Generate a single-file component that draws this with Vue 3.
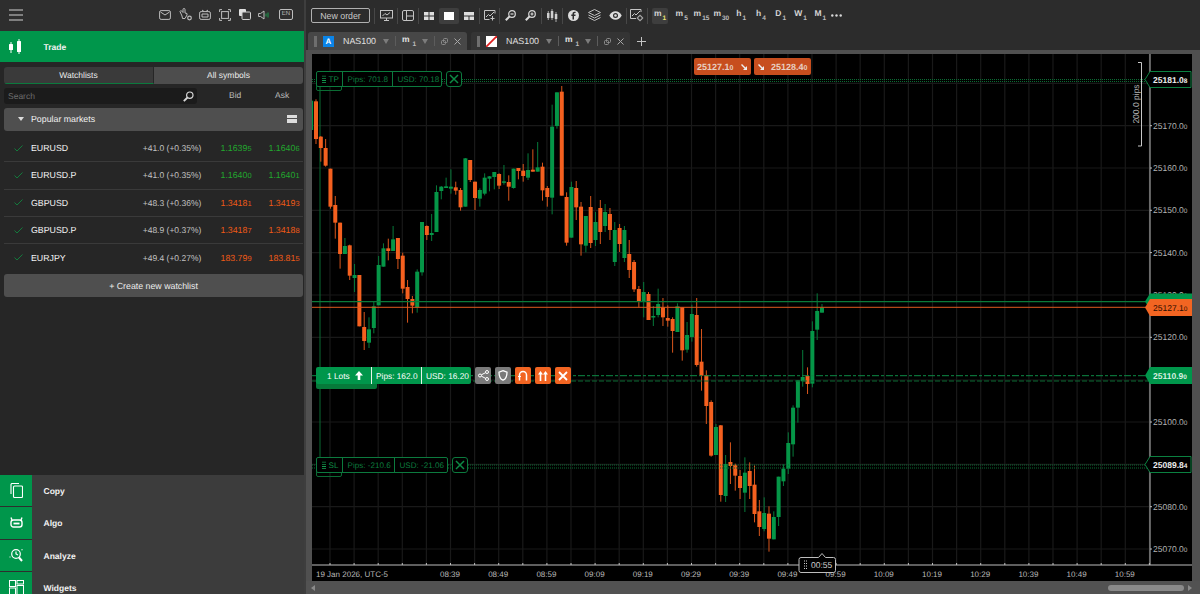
<script setup>
// candle rows: colour, wick top, body top, body bottom, wick bottom
const part1 = `g 0 62 150 175|o 58 64 177 192|o 168 170 204 245|o 177 204 257 260|o 266 266 380 386|o 348 375 428 476|o 428 428 522 566|g 474 498 522 522|o 494 496 587 600|g 552 585 594 636|o 585 585 739 739|o 696 741 783 810|g 712 748 788 804|g 666 679 744 760|g 528 555 676 676|g 490 505 560 560|o 476 505 513 541|g 438 478 513 513|o 474 474 537 567|o 518 527 626 640|o 600 621 657 728|o 648 657 677 700|g 568 575 682 698|g 426 426 577 587|o 436 438 465 480|g 402 459 465 483|g 316 336 456 456|g 318 320 333 358|g 293 319 324 324|g 268 320 326 341|o 305 322 332 344|o 324 330 382 392|g 234 235 380 380|o 240 240 300 306|o 305 305 354 390|g 325 330 356 380|g 280 293 341 346|g 288 289 296 334|g 276 276 291 328|o 280 282 317 327|g 255 304 308 314|o 286 306 320 362|g 266 266 324 326|o 264 264 273 298|o 252 272 288 305|g 220 270 293 300|o 208 269 275 275|g 186 262 275 275|o 248 260 331 362|o 318 324 351 380|g 74 140 353 403|g 37 37 138 146|o 18 35 347 347|o 337 351 488 497|g 305 321 473 473|o 303 324 382 420|o 366 380 493 527|g 408 408 497 517`
const part2 = `o 196 207 243 248|g 212 222 240 246|o 200 208 232 244|g 204 212 226 232|o 208 214 230 240|g 222 230 262 266|o 224 228 244 252|g 226 230 258 262|o 240 254 270 278`
const part3 = `o -60 -54 28 36|o 18 27 66 82|g 6 36 66 112|o 36 42 120 120|g 78 108 112 138|g 26 72 105 112|o 54 82 112 138|o 76 114 122 140|o 112 117 153 218|g 70 79 156 156|o 82 82 211 242|g 126 165 209 218|g 74 102 171 185|o 54 105 255 260|o 147 245 287 332|o 271 285 378 432|o 361 366 527 530|g 432 441 525 525|o 435 436 645 665|g 525 552 648 666|o 487 546 558 612|o 551 555 587 632|o 570 588 624 657|g 532 578 638 696|o 547 573 618 657|o 556 614 702 727|o 660 694 741 768|g 652 699 747 754|o 679 701 776 815|g 694 711 778 778|g 590 590 711 738|g 553 566 604 618|g 457 489 566 582|g 376 383 493 530|g 300 301 383 428|g 210 291 304 320|o 262 288 312 342|g 124 153 311 322|g 40 93 149 180|g 72 83 98 98`

function parseRows(text, base, scale) {
  return text.split('|').map((row) => {
    const [dir, ...vals] = row.split(' ')
    const [top, bodyTop, bodyBot, bot] = vals.map((v) => base + Number(v) / scale)
    return { dir, top, bodyTop, bodyBot, bot }
  })
}

const candles = [
  ...parseRows(part1, 80, 3),
  ...parseRows(part2, 0, 1),
  ...parseRows(part3, 280, 3)
].map((c, i) => ({ ...c, x: 311.18 + 4.819 * i }))

const gridX = Array.from({ length: 35 }, (_, i) => 330 + 24.1 * i)
const prices = [
  { v: '25170.0', y: 125.7 }, { v: '25160.0', y: 168 }, { v: '25150.0', y: 210.3 },
  { v: '25140.0', y: 252.6 }, { v: '25130.0', y: 295 }, { v: '25120.0', y: 337.3 },
  { v: '25100.0', y: 422 }, { v: '25090.0', y: 464.4 },
  { v: '25080.0', y: 506.7 }, { v: '25070.0', y: 549 }
]
const gridY = [83.4, 125.7, 168, 210.3, 252.6, 295, 337.3, 380, 422, 464.4, 506.7, 549]
const times = ['08:39', '08:49', '08:59', '09:09', '09:19', '09:29', '09:39', '09:49', '09:59', '10:09', '10:19', '10:29', '10:39', '10:49', '10:59']
  .map((t, i) => ({ t, x: 450 + 48.2 * i }))

const rows = [
  { name: 'EURUSD', change: '+41.0 (+0.35%)', bid: '1.1639', bidS: '5', ask: '1.1640', askS: '6', up: true },
  { name: 'EURUSD.P', change: '+41.0 (+0.35%)', bid: '1.1640', bidS: '0', ask: '1.1640', askS: '1', up: true },
  { name: 'GBPUSD', change: '+48.3 (+0.36%)', bid: '1.3418', bidS: '1', ask: '1.3419', askS: '3', up: false },
  { name: 'GBPUSD.P', change: '+48.9 (+0.37%)', bid: '1.3418', bidS: '7', ask: '1.3418', askS: '8', up: false },
  { name: 'EURJPY', change: '+49.4 (+0.27%)', bid: '183.79', bidS: '9', ask: '183.81', askS: '5', up: false }
]

const timeframes = [
  { l: 'm', s: '1', active: true }, { l: 'm', s: '5' }, { l: 'm', s: '15' }, { l: 'm', s: '30' },
  { l: 'h', s: '1' }, { l: 'h', s: '4' }, { l: 'D', s: '1' }, { l: 'W', s: '1' }, { l: 'M', s: '1' }
]

const tabs = [
  { id: 'a', active: true },
  { id: 'b', active: false }
]
</script>

<template>
  <div class="app">
    <aside class="side">
      <header class="side-head">
        <svg class="burger" width="14" height="12" viewBox="0 0 14 12"><path d="M0 1h14M0 6h14M0 11h14" stroke="#cfcfcf" stroke-width="1.2"/></svg>
        <div class="head-icons">
          <svg width="12" height="10" viewBox="0 0 12 10" fill="none" stroke="#bdbdbd"><rect x=".6" y=".6" width="10.8" height="8.8" rx="1.5"/><path d="M1.5 2l4.500 3 4.500-3"/></svg>
          <svg width="13" height="13" viewBox="0 0 13 13" fill="none" stroke="#bdbdbd"><path d="M1 3.500l1-1 2 2V1.500a1 1 0 012 0V5l2 .5V7l-2 3.500H3.500L3 8z"/><circle cx="10.500" cy="10" r="1.800" stroke-width="1.200"/></svg>
          <svg width="12" height="11" viewBox="0 0 12 11" fill="none" stroke="#bdbdbd"><rect x=".6" y="2.600" width="10.800" height="7.800" rx="1.500"/><path d="M3 1l2 1.500M9 1L7 2.500M3 5h6v3H3z"/></svg>
          <svg width="12" height="12" viewBox="0 0 12 12" fill="none" stroke="#bdbdbd"><path d="M.6 3V.6H3M9 .6h2.400V3M11.400 9v2.400H9M3 11.400H.6V9"/><rect x="2.600" y="2.600" width="6.800" height="6.800"/></svg>
          <svg width="12" height="11" viewBox="0 0 12 11"><rect x="0" y="0" width="7" height="7" rx="1" fill="#e0e0e0"/><rect x="3" y="3" width="8.500" height="7.500" rx="1" fill="#3a3a3a" stroke="#cfcfcf"/></svg>
          <svg width="13" height="10" viewBox="0 0 13 10" fill="none"><path d="M.6 3.500h2L6 1v8L2.600 6.500h-2z" stroke="#bdbdbd"/><path d="M8 3.500v3M10 2.500v5" stroke="#1c9a4c"/></svg>
          <span class="lang">EN</span>
        </div>
      </header>

      <div class="trade">
        <span class="nav-ico">
          <svg width="14" height="15" viewBox="0 0 14 15" fill="#fff"><rect x="0" y="5" width="4" height="6" rx=".5"/><path d="M2 3v11" stroke="#fff"/><rect x="8" y="2" width="4" height="11" rx=".5"/><path d="M10 0v15" stroke="#fff"/></svg>
        </span>
        <span class="nav-text">Trade</span>
      </div>

      <div class="tabs-switch">
        <div class="switch on">Watchlists</div>
        <div class="switch">All symbols</div>
      </div>

      <div class="search-row">
        <div class="search">
          <span>Search</span>
          <svg width="11" height="11" viewBox="0 0 11 11" fill="none" stroke="#d8d8d8" stroke-width="1.200"><circle cx="6.800" cy="4.200" r="3.200"/><path d="M4.500 6.500L.8 10.200" stroke-width="1.800"/></svg>
        </div>
        <span class="col-bid">Bid</span>
        <span class="col-ask">Ask</span>
      </div>

      <div class="group-head">
        <span class="caret"></span>
        <span class="group-name">Popular markets</span>
        <span class="group-btn"></span>
      </div>

      <div class="list">
        <div v-for="r in rows" :key="r.name" class="row">
          <svg width="9" height="7" viewBox="0 0 9 7" fill="none" stroke="#137a3c"><path d="M.5 3.500L3 6 8.500.5"/></svg>
          <span class="sym">{{ r.name }}</span>
          <span class="chg">{{ r.change }}</span>
          <span class="px" :class="r.up ? 'up' : 'down'">{{ r.bid }}<small>{{ r.bidS }}</small></span>
          <span class="px" :class="r.up ? 'up' : 'down'">{{ r.ask }}<small>{{ r.askS }}</small></span>
        </div>
      </div>

      <div class="create">+ Create new watchlist</div>

      <nav class="bottom-nav">
        <div class="nav-item">
          <span class="nav-ico">
            <svg width="13" height="15" viewBox="0 0 13 15" fill="none" stroke="#fff" stroke-width="1.100"><path d="M1 11V1.500a1 1 0 011-1h7"/><rect x="3.500" y="3" width="9" height="11.500" rx="1"/></svg>
          </span>
          <span class="nav-text">Copy</span>
        </div>
        <div class="nav-item">
          <span class="nav-ico">
            <svg width="13" height="11" viewBox="0 0 13 11" fill="none" stroke="#fff" stroke-width="1.400"><path d="M2 3L1 .5M11 3l1-2.500"/><rect x="1" y="3" width="11" height="7" rx="2.500"/><path d="M3.500 6.500h6" stroke-width="1.800"/></svg>
          </span>
          <span class="nav-text">Algo</span>
        </div>
        <div class="nav-item">
          <span class="nav-ico">
            <svg width="15" height="14" viewBox="0 0 15 14" fill="none" stroke="#fff" stroke-width="1.200"><circle cx="7" cy="6" r="4.300"/><path d="M10 9.500l3 3.500" stroke-width="2"/><path d="M7 3.500V6l2 1M.5 9h1M12.500 2l1-.5"/></svg>
          </span>
          <span class="nav-text">Analyze</span>
        </div>
        <div class="nav-item">
          <span class="nav-ico">
            <svg width="15" height="15" viewBox="0 0 15 15" fill="none" stroke="#fff" stroke-width="1"><rect x=".5" y=".5" width="6" height="6"/><rect x="8" y=".5" width="6.500" height="3.500"/><rect x=".5" y="8" width="6" height="7"/><rect x="8" y="5.500" width="6.500" height="9.500"/></svg>
          </span>
          <span class="nav-text">Widgets</span>
        </div>
      </nav>
    </aside>

    <main class="main">
      <div class="toolbar">
        <button class="new-order">New order</button>
        <i class="sep"></i>
        <span class="tool w22"><svg width="13" height="11" viewBox="0 0 13 11" fill="none" stroke="#c4c4c4"><rect x=".5" y=".5" width="12" height="7.500"/><path d="M2.500 6l2.500-2.500 2 1.500 3-2.500M4 10.500h5M6.500 8v2.500"/></svg></span>
        <i class="sep"></i>
        <span class="tool"><svg width="12" height="11" viewBox="0 0 12 11" fill="none" stroke="#c4c4c4"><rect x=".5" y=".5" width="11" height="10" rx="1.500"/><path d="M4.500 .5v10M4.500 6h7"/></svg></span>
        <i class="sep"></i>
        <span class="tool"><svg width="10" height="8" viewBox="0 0 10 8" fill="#ddd"><rect width="4.500" height="3.500"/><rect x="5.500" width="4.500" height="3.500"/><rect y="4.500" width="4.500" height="3.500"/><rect x="5.500" y="4.500" width="4.500" height="3.500"/></svg></span>
        <span class="tool current"><svg width="10" height="8" viewBox="0 0 10 8" fill="#fff"><rect width="10" height="8"/></svg></span>
        <span class="tool"><svg width="10" height="8" viewBox="0 0 10 8" fill="#ddd"><rect width="10" height="3.500"/><rect y="4.500" width="4.500" height="3.500"/><rect x="5.500" y="4.500" width="4.500" height="3.500"/></svg></span>
        <i class="sep"></i>
        <span class="tool w19"><svg width="12" height="11" viewBox="0 0 12 11" fill="none" stroke="#c4c4c4"><path d="M11 3.500V.5H.5v9h5"/><path d="M2 7l2.500-2.500 1.500 1.500 4-4M8.500 6v4.500M6.500 8.500h4"/></svg></span>
        <i class="sep"></i>
        <span class="tool w20-5"><svg width="11" height="11" viewBox="0 0 11 11" fill="none" stroke="#d8d8d8" stroke-width="1.200"><circle cx="7" cy="4" r="3.300"/><path d="M4.500 6.500L.8 10.200" stroke-width="2"/><path d="M5.500 4h3"/></svg></span>
        <span class="tool w20-5"><svg width="11" height="11" viewBox="0 0 11 11" fill="none" stroke="#d8d8d8" stroke-width="1.200"><circle cx="7" cy="4" r="3.300"/><path d="M4.500 6.500L.8 10.200" stroke-width="2"/><path d="M5.500 4h3M7 2.500v3"/></svg></span>
        <i class="sep"></i>
        <span class="tool"><svg width="11" height="13" viewBox="0 0 11 13" fill="#cfcfcf"><rect y="4" width="2.500" height="5"/><path d="M1.250 2v9M5 0v11M9 3v10" stroke="#cfcfcf" stroke-width=".8"/><rect x="3.800" y="2" width="2.500" height="7"/><rect x="7.800" y="5" width="2.500" height="5"/></svg></span>
        <i class="sep"></i>
        <span class="tool w21"><svg width="11" height="11" viewBox="0 0 11 11"><circle cx="5.500" cy="5.500" r="5.500" fill="#ddd"/><path d="M6 9.500V6h1.500V4.500H6V4c0-.6.300-.9 1-.9h.6V1.800H6.500C5.200 1.800 4.500 2.600 4.500 3.900v.6H3.300V6h1.200v3.500z" fill="#2c2c2c"/></svg></span>
        <span class="tool w21"><svg width="13" height="13" viewBox="0 0 13 13" fill="none" stroke="#bdbdbd"><path d="M6.500.5l6 3-6 3-6-3zM.5 6l6 3 6-3M.5 8.500l6 3 6-3"/></svg></span>
        <span class="tool w21"><svg width="13" height="9" viewBox="0 0 13 9"><path d="M.3 4.500C2 1.500 4 .3 6.500.3s4.500 1.200 6.200 4.200C11 7.500 9 8.700 6.500 8.700S2 7.500.3 4.500z" fill="#ddd"/><circle cx="6.500" cy="4.500" r="2.500" fill="#2c2c2c"/><circle cx="6.500" cy="4.500" r="1.300" fill="#ddd"/></svg></span>
        <i class="sep"></i>
        <span class="tool"><svg width="14" height="13" viewBox="0 0 14 13" fill="none" stroke="#c4c4c4"><path d="M11 3V.5H.5v9H6"/><path d="M2 7l2.500-2.500 1.500 1.500 4-4"/><circle cx="10" cy="9" r="2.200"/><path d="M10 5.800v1M10 11.200v1M6.800 9h1M12.200 9h1"/></svg></span>
        <i class="sep"></i>
        <div class="tf-list">
          <span v-for="tf in timeframes" :key="tf.l + tf.s" class="tf" :class="{ active: tf.active }">
            <b>{{ tf.l }}</b><sub>{{ tf.s }}</sub>
          </span>
          <svg class="more" width="11" height="3" viewBox="0 0 11 3" fill="#d8d8d8"><circle cx="1.300" cy="1.500" r="1.200"/><circle cx="5.500" cy="1.500" r="1.200"/><circle cx="9.700" cy="1.500" r="1.200"/></svg>
        </div>
      </div>

      <div class="tabstrip">
        <div v-for="t in tabs" :key="t.id" class="tab" :class="{ active: t.active }">
          <span class="grip"></span>
          <span v-if="t.id === 'a'" class="sym-ico blue">A</span>
          <svg v-else class="sym-ico" width="11" height="11" viewBox="0 0 11 11"><rect width="11" height="11" fill="#fff"/><path d="M0 11L11 0" stroke="#e02020" stroke-width="1.800"/></svg>
          <span class="tab-name">NAS100</span>
          <span class="tri"></span>
          <i class="tab-sep"></i>
          <span class="tab-tf"><b>m</b><sub>1</sub></span>
          <span class="tri"></span>
          <i class="tab-sep"></i>
          <svg width="7" height="7" viewBox="0 0 7 7" fill="none" stroke="#8c8c8c"><rect x="2.500" y=".5" width="4" height="4" rx="1"/><rect x=".5" y="2.500" width="4" height="4" rx="1"/></svg>
          <svg class="tab-x" width="7" height="7" viewBox="0 0 7 7" stroke="#a8a8a8"><path d="M.5 .5l6 6M6.500 .5l-6 6"/></svg>
        </div>
        <svg class="plus" width="9" height="9" viewBox="0 0 9 9" stroke="#c4c4c4"><path d="M4.500 0v9M0 4.500h9"/></svg>
      </div>

      <div class="chart-frame">
        <div class="chart">
          <svg class="plot" width="880" height="527" viewBox="312 54 880 527" font-family="Liberation Sans, Arial, sans-serif">
            <g stroke="#191919" stroke-width="1.200">
              <line v-for="x in gridX" :key="x" :x1="x" :x2="x" y1="54" y2="565" />
              <line v-for="y in gridY" :key="y" x1="312" x2="1150" :y1="y" :y2="y" />
            </g>

            <line x1="320" x2="320" y1="85" y2="468" stroke="#0b6b33" />

            <g v-for="(c, i) in candles" :key="i">
              <line :x1="c.x" :x2="c.x" :y1="c.top" :y2="c.bot" :stroke="c.dir === 'g' ? '#067a3a' : '#d9561c'" />
              <rect
                :x="c.x - 2"
                :y="c.bodyTop"
                width="4"
                :height="Math.max(c.bodyBot - c.bodyTop, 1.5)"
                :fill="c.dir === 'g' ? '#059647' : '#f4601f'"
              />
            </g>

            <g fill="none">
              <path d="M312 79.500H1150M312 81.500H1150" stroke="#0b6b33" stroke-dasharray="1 1" />
              <path d="M312 465H1150M312 468H1150" stroke="#0b6b33" stroke-dasharray="1 1" />
              <path d="M312 375.700H1150" stroke="#0d8a45" stroke-dasharray="7 2 3 2" />
              <path d="M312 381H1150" stroke="#0b6b33" stroke-dasharray="5 2" />
              <path d="M312 301.700H1150" stroke="#0b7a3a" stroke-width="1.200" />
              <path d="M312 307.300H1150" stroke="#e0591f" />
            </g>

            <!-- axes -->
            <path d="M1150 54V565M312 565H1192" stroke="#bdbdbd" fill="none" />
            <g stroke="#bdbdbd">
              <line v-for="x in gridX" :key="'t' + x" :x1="x" :x2="x" y1="563" y2="565" />
              <line v-for="p in prices" :key="'p' + p.y" x1="1150" x2="1152" :y1="p.y" :y2="p.y" />
            </g>
            <g fill="#b4b4b4" font-size="8.500">
              <text v-for="p in prices" :key="p.v" x="1153" :y="p.y + 3">{{ p.v }}<tspan font-size="6.500">0</tspan></text>
            </g>
            <g fill="#b8b8b8" font-size="8">
              <text x="316" y="577">19 Jan 2026, UTC-5</text>
              <text v-for="t in times" :key="t.t" :x="t.x" y="577" text-anchor="middle">{{ t.t }}</text>
            </g>

            <!-- pips bracket -->
            <path d="M1138 62.500H1141.500V146H1138" fill="none" stroke="#c8c8c8" />
            <text transform="translate(1139 104) rotate(-90)" text-anchor="middle" font-size="8.500" fill="#b4b4b4">200.0 pips</text>

            <!-- price flags -->
            <path d="M1145 79.500L1150 71.500H1191V87.500H1150Z" fill="#000" stroke="#0b8040" />
            <text x="1153" y="82.500" font-size="8.500" font-weight="bold" fill="#f0f0f0">25181.0<tspan font-size="6.500">8</tspan></text>
            <path d="M1145 301.500L1150 293.500H1192V309.500H1150Z" fill="#00964b" />
            <path d="M1145 307.500L1150 299H1192V316H1150Z" fill="#f26522" />
            <text x="1153" y="310.500" font-size="8.500" fill="#2a0c00">25127.1<tspan font-size="6.500">0</tspan></text>
            <path d="M1145 375.500L1150 367H1192V384H1150Z" fill="#00964b" />
            <text x="1153" y="378.500" font-size="8.500" font-weight="bold" fill="#d8f0e0">25110.9<tspan font-size="6.500">0</tspan></text>
            <path d="M1145 464.500L1150 456.500H1191V472.500H1150Z" fill="#000" stroke="#0b8040" />
            <text x="1153" y="467.500" font-size="8.500" font-weight="bold" fill="#f0f0f0">25089.8<tspan font-size="6.500">4</tspan></text>

            <!-- bar timer -->
            <path d="M801 557.500H818.500L822 553.500L825.500 557.500H833.500Q835.500 557.500 835.500 559.500V570.500Q835.500 572.500 833.500 572.500H801Q799 572.500 799 570.500V559.500Q799 557.500 801 557.500Z" fill="#000" stroke="#bdbdbd" />
            <path d="M804 561h1M806 561h1M804 563.500h1M806 563.500h1M804 566h1M806 566h1M804 568.500h1M806 568.500h1" stroke="#d0d0d0" stroke-width="1.200" />
            <text x="811" y="568" font-size="8.500" fill="#cfcfcf">00:55</text>
          </svg>

          <!-- top quote buttons -->
          <div class="quotes">
            <div class="quote">
              <span>25127.1<small>0</small></span>
              <svg width="6" height="6" viewBox="0 0 6 6" fill="#eee"><path d="M0 1l1-1 3.500 3.500L6 2v4H2l1.500-1.500z"/></svg>
            </div>
            <div class="quote">
              <svg width="6" height="6" viewBox="0 0 6 6" fill="#eee"><path d="M0 1l1-1 3.500 3.500L6 2v4H2l1.500-1.500z"/></svg>
              <span>25128.4<small>0</small></span>
            </div>
          </div>

          <!-- take profit -->
          <div class="line-chip tp">
            <div class="chip-box">
              <span class="seg first"><i class="dots"></i>TP</span>
              <span class="seg s-tp-pips">Pips: 701.8</span>
              <span class="seg last">USD: 70.18</span>
            </div>
            <span class="chip-close"><svg width="10" height="10" viewBox="0 0 10 10" stroke="#0d8a45" stroke-width="1.500"><path d="M1 1l8 8M9 1L1 9"/></svg></span>
          </div>

          <!-- stop loss -->
          <div class="line-chip sl">
            <div class="chip-box">
              <span class="seg first"><i class="dots"></i>SL</span>
              <span class="seg s-sl-pips">Pips: -210.6</span>
              <span class="seg last sl-usd">USD: -21.06</span>
            </div>
            <span class="chip-close"><svg width="10" height="10" viewBox="0 0 10 10" stroke="#0d8a45" stroke-width="1.500"><path d="M1 1l8 8M9 1L1 9"/></svg></span>
          </div>

          <!-- open position -->
          <div class="position">
            <div class="pos-under"></div>
            <div class="pos-bar">
              <span class="pos-lots">1 Lots
                <svg width="8" height="9" viewBox="0 0 8 9" fill="#fff"><path d="M4 0l4 4.500H5.300V9H2.700V4.500H0z"/></svg>
              </span>
              <span class="pos-seg pips">Pips: 162.0</span>
              <span class="pos-seg usd">USD: 16.20</span>
            </div>
            <span class="pos-btn grey"><svg width="11" height="11" viewBox="0 0 11 11" fill="none" stroke="#fff"><circle cx="2" cy="5.500" r="1.500"/><circle cx="9" cy="2" r="1.500"/><circle cx="9" cy="9" r="1.500"/><path d="M3.400 4.800l4.300-2.200M3.400 6.200l4.300 2.200"/></svg></span>
            <span class="pos-btn grey"><svg width="10" height="11" viewBox="0 0 10 11" fill="none" stroke="#fff" stroke-width="1.300"><path d="M5 .7l4 1.500c0 4-1 6.800-4 8-3-1.200-4-4-4-8z"/></svg></span>
            <span class="pos-btn orange"><svg width="10" height="11" viewBox="0 0 10 11" fill="none" stroke="#fff" stroke-width="1.500"><path d="M1.500 10.500V5a3.500 3.500 0 017 0v5.500"/><path d="M0 7l1.500-1.500L3 7" stroke-width="1"/></svg></span>
            <span class="pos-btn orange"><svg width="10" height="10" viewBox="0 0 10 10" fill="#fff"><path d="M2.500 0L5 3.500H3.300V10H1.700V3.500H0zM7.500 0L10 3.500H8.300V10H6.700V3.500H5z"/></svg></span>
            <span class="pos-btn orange"><svg width="10" height="10" viewBox="0 0 10 10" stroke="#fff" stroke-width="1.800"><path d="M1 1l8 8M9 1L1 9"/></svg></span>
          </div>
        </div>
      </div>

      <div class="scroller">
        <span class="arrow left"></span>
        <span class="thumb"></span>
        <span class="arrow right"></span>
      </div>
    </main>
  </div>
</template>

<style>
html, body {
  margin: 0;
  background: #2c2c2c;
}
</style>

<style scoped>
.app {
  display: flex;
  width: 1200px;
  height: 594px;
  overflow: hidden;
  font-family: "Liberation Sans", Arial, sans-serif;
  font-size: 8.5px;
  color: #e6e6e6;
  background: #2c2c2c;
  text-rendering: geometricPrecision;
}

/* left panel */
.side {
  width: 304px;
  flex: none;
  display: flex;
  flex-direction: column;
  background: #262626;
  box-sizing: border-box;
}
.side-head {
  height: 31px;
  flex: none;
  display: flex;
  align-items: center;
  justify-content: space-between;
  padding: 0 11px 2px 9px;
  background: #2e2e2e;
  box-sizing: border-box;
}
.burger {
  width: 14px;
}
.head-icons {
  display: flex;
  align-items: center;
  gap: 7.700px;
}
.lang {
  width: 12px;
  height: 9px;
  border: 1px solid #bdbdbd;
  border-radius: 2px;
  font-size: 6px;
  line-height: 9px;
  text-align: center;
  color: #bdbdbd;
}
.trade {
  height: 31px;
  flex: none;
  display: flex;
  align-items: center;
  background: #00964b;
  font-weight: bold;
  color: #fff;
}
.nav-ico {
  width: 32px;
  display: flex;
  align-items: center;
  justify-content: center;
  flex: none;
}
.nav-text {
  margin-left: 11.5px;
  font-weight: bold;
  color: #f2f2f2;
}
.tabs-switch {
  display: flex;
  margin: 5px 1px 0 4px;
  height: 17px;
  border-radius: 3px;
  overflow: hidden;
  flex: none;
}
.switch {
  flex: 1;
  display: flex;
  align-items: center;
  justify-content: center;
  background: #4d4d4d;
  color: #ececec;
  padding-bottom: 1px;
  box-sizing: border-box;
}
.switch.on {
  background: #3a3a3a;
  border-bottom: 1px solid #0c7a3e;
  border-right: 1px solid #262626;
}
.search-row {
  display: flex;
  align-items: center;
  margin-top: 4px;
  height: 16px;
  flex: none;
  padding-left: 4px;
}
.search {
  width: 193px;
  height: 16px;
  flex: none;
  display: flex;
  align-items: center;
  justify-content: space-between;
  box-sizing: border-box;
  padding: 0 3px 0 4px;
  background: #1b1b1b;
  border-radius: 3px;
  color: #6c6c6c;
}
.col-bid {
  margin-left: 32px;
  width: 20px;
  color: #bdbdbd;
  padding-bottom: 2px;
}
.col-ask {
  margin-left: 26px;
  color: #bdbdbd;
  padding-bottom: 2px;
}
.group-head {
  display: flex;
  align-items: center;
  margin: 4px 1px 0 4px;
  height: 23px;
  flex: none;
  background: #4f4f4f;
  border-radius: 3px;
  padding-bottom: 1px;
  box-sizing: border-box;
}
.caret {
  width: 0;
  height: 0;
  margin-left: 14px;
  border-left: 3px solid transparent;
  border-right: 3px solid transparent;
  border-top: 4px solid #dcdcdc;
}
.group-name {
  margin-left: 7px;
  flex: 1;
  color: #f0f0f0;
  font-size: 8.800px;
}
.group-btn {
  width: 10px;
  height: 8px;
  margin-right: 6px;
  background: linear-gradient(#ddd 0 3.500px, #4f4f4f 3.500px 4.500px, #ddd 4.500px);
}
.list {
  margin: 4px 1px 0 4px;
  flex: none;
}
.row {
  display: grid;
  grid-template-columns: 27px 111.7px 77.8px 48px 1fr;
  align-items: center;
  height: 27.300px;
  box-sizing: border-box;
  border-bottom: 1px solid #3a3a3a;
}
.row svg {
  margin-left: 10px;
}
.row:last-child {
  border-bottom: none;
}
.sym {
  color: #f4f4f4;
  font-size: 8.800px;
}
.chg {
  color: #c2c2c2;
}
.px {
  font-size: 8.800px;
}
.px small {
  font-size: 7.400px;
}
.up {
  color: #22a82e;
}
.down {
  color: #f05a16;
}
.create {
  margin: 3px 1px 0 4px;
  height: 23px;
  flex: none;
  display: flex;
  align-items: center;
  justify-content: center;
  background: #4f4f4f;
  border-radius: 3px;
  color: #ececec;
  font-size: 8.800px;
}
.bottom-nav {
  margin-top: auto;
  height: 119px;
  overflow: hidden;
  background: #3c3c3c;
  flex: none;
}
.nav-item {
  display: flex;
  height: 32.300px;
  align-items: stretch;
}
.nav-item .nav-ico {
  background: #00964b;
  border-bottom: 1px solid #2e2e2e;
  box-sizing: border-box;
}
.nav-item .nav-text {
  align-self: center;
}

/* right side */
.main {
  flex: 1;
  min-width: 0;
  display: flex;
  flex-direction: column;
  border-left: 2px solid #3e3e3e;
}
.toolbar {
  height: 32px;
  flex: none;
  display: flex;
  align-items: center;
  box-sizing: border-box;
  padding: 0 0 1px 5px;
  background: #2c2c2c;
}
.new-order {
  width: 59px;
  height: 15px;
  margin-right: 4px;
  padding: 0;
  border: 1px solid #b0b0b0;
  border-radius: 2px;
  background: #2c2c2c;
  color: #c8c8c8;
  font: 8.800px "Liberation Sans", Arial, sans-serif;
}
.sep {
  width: 1px;
  height: 16px;
  flex: none;
  background: #474747;
}
.tool {
  width: 20px;
  height: 16px;
  flex: none;
  display: flex;
  align-items: center;
  justify-content: center;
}
.tool.w22 {
  width: 22px;
}
.tool.w21 {
  width: 21px;
}
.tool.w20-5 {
  width: 20.500px;
}
.tool.w19 {
  width: 19px;
}
.tool.current {
  background: #3e3e3e;
  border-radius: 2px;
}
.tf-list {
  display: flex;
  align-items: center;
  padding-left: 4px;
}
.tf {
  width: 19.800px;
  height: 16px;
  flex: none;
  display: flex;
  align-items: flex-start;
  justify-content: center;
  color: #d4d4d4;
}
.tf b, .tab-tf b {
  font-weight: bold;
  font-size: 8.500px;
  line-height: 10px;
}
.tf sub, .tab-tf sub {
  font-size: 6.500px;
  font-weight: bold;
  line-height: 6px;
  margin: 8px 0 0 1px;
  color: #bcbcbc;
}
.tf.active {
  width: 16px;
  margin-right: 3.800px;
  background: #3e3e3e;
  border-radius: 2px;
}
.tf.active sub {
  color: #e8e070;
}
.more {
  margin-left: 1px;
}
.tabstrip {
  height: 18px;
  flex: none;
  display: flex;
  align-items: stretch;
  padding-left: 2px;
  gap: 4px;
  background: #2c2c2c;
}
.tab {
  width: 159px;
  flex: none;
  display: flex;
  align-items: center;
  box-sizing: border-box;
  padding-left: 6px;
  background: #343434;
  border-radius: 3px 3px 0 0;
}
.tab.active {
  background: #474747;
}
.grip {
  width: 3px;
  height: 11px;
  background: #6e6e6e;
  margin-right: 6px;
}
.sym-ico {
  width: 11px;
  height: 11px;
  flex: none;
  margin-right: 9px;
}
.sym-ico.blue {
  background: #0a84e8;
  color: #fff;
  font-size: 8px;
  line-height: 11px;
  text-align: center;
  font-weight: bold;
}
.tab-name {
  width: 34px;
  color: #e2e2e2;
  font-size: 8.900px;
}
.tri {
  width: 0;
  height: 0;
  margin-left: 6px;
  border-left: 3px solid transparent;
  border-right: 3px solid transparent;
  border-top: 5px solid #7c7c7c;
}
.tab-sep {
  width: 1px;
  height: 10px;
  margin: 0 6px;
  background: #5c5c5c;
}
.tab-tf {
  width: 14px;
  display: flex;
  align-items: flex-start;
  color: #e2e2e2;
  height: 14px;
}
.tab-tf sub {
  margin: 8px 0 0 3px;
}
.tab-x {
  margin-left: 6px;
}
.plus {
  align-self: center;
  margin-left: 2.500px;
}
.chart-frame {
  flex: 1;
  min-height: 0;
  background: #505050;
  padding: 4px 8px 0 6px;
}
.chart {
  position: relative;
  width: 880px;
  height: 527px;
  background: #000;
  overflow: hidden;
}
.plot {
  display: block;
}
.quotes {
  position: absolute;
  left: 382px;
  top: 4px;
  display: flex;
  gap: 3.500px;
}
.quote {
  width: 56.500px;
  height: 17px;
  display: flex;
  align-items: center;
  justify-content: space-between;
  box-sizing: border-box;
  padding: 0 4px 0 3px;
  background: #c74e1e;
  border-radius: 2px;
  color: #e8cfc2;
  font-weight: bold;
  font-size: 9px;
}
.quote small {
  font-size: 7px;
}
.quote + .quote {
  padding: 0 3px 0 4px;
}
.line-chip {
  position: absolute;
  left: 4px;
  display: flex;
  gap: 4px;
  color: #0c7a3e;
  white-space: nowrap;
  font-size: 8.100px;
}
.line-chip.tp {
  top: 17px;
}
.line-chip.sl {
  top: 403px;
}
.line-chip::before {
  content: "";
  position: absolute;
  left: 0;
  top: 3px;
  width: 24px;
  height: 15px;
  border: 1px solid #0b6b33;
  border-radius: 2px;
}
.chip-box {
  position: relative;
  display: flex;
  height: 16px;
  box-sizing: border-box;
  border: 1px solid #0c7a3e;
  border-radius: 2px;
  background: #000;
}
.seg {
  display: flex;
  align-items: center;
  box-sizing: border-box;
  padding-left: 4.500px;
  border-right: 1px solid #0c7a3e;
}
.seg.first {
  width: 26px;
  color: #0f8a45;
}
.seg.s-tp-pips {
  width: 50px;
}
.seg.s-sl-pips {
  width: 52px;
}
.seg.last {
  width: 48px;
  border-right: none;
}
.seg.sl-usd {
  width: 52px;
}
.dots {
  width: 4px;
  height: 9px;
  margin-right: 3px;
  background-image: radial-gradient(#12a052 .6px, transparent .8px);
  background-size: 2px 2.200px;
}
.chip-close {
  position: relative;
  width: 16px;
  height: 16px;
  display: flex;
  align-items: center;
  justify-content: center;
  box-sizing: border-box;
  border: 1px solid #0c7a3e;
  border-radius: 3px;
  background: #000;
}
.position {
  position: absolute;
  left: 4px;
  top: 313px;
  display: flex;
  gap: 4px;
}
.pos-under {
  position: absolute;
  left: 0;
  top: 3px;
  width: 61px;
  height: 19px;
  background: #067a3a;
  border-radius: 2px;
}
.pos-bar {
  position: relative;
  display: flex;
  width: 155px;
  height: 17px;
  background: #00964b;
  border-radius: 2px;
  color: #fff;
  font-size: 8.300px;
}
.pos-lots {
  width: 55px;
  display: flex;
  align-items: center;
  gap: 5px;
  box-sizing: border-box;
  padding-left: 11px;
  flex: none;
}
.pos-seg {
  display: flex;
  align-items: center;
  box-sizing: border-box;
  padding-left: 4px;
  border-left: 1px solid #e8f4ec;
}
.pos-seg.pips {
  width: 50px;
}
.pos-btn {
  position: relative;
  width: 16px;
  height: 17px;
  display: flex;
  align-items: center;
  justify-content: center;
  border-radius: 2px;
}
.pos-btn.grey {
  background: #7a7a7a;
}
.pos-btn.orange {
  background: #f26522;
}
.scroller {
  height: 13px;
  flex: none;
  display: flex;
  align-items: center;
  background: #525252;
  padding-left: 5px;
}
.thumb {
  width: 76px;
  height: 6px;
  margin-left: auto;
  background: #8a8a8a;
  border-radius: 3px;
}
.arrow {
  width: 0;
  height: 0;
  border-top: 3px solid transparent;
  border-bottom: 3px solid transparent;
}
.arrow.left {
  border-right: 4px solid #8a8a8a;
}
.arrow.right {
  margin: 0 8px 0 4px;
  border-left: 4px solid #8a8a8a;
}
</style>
